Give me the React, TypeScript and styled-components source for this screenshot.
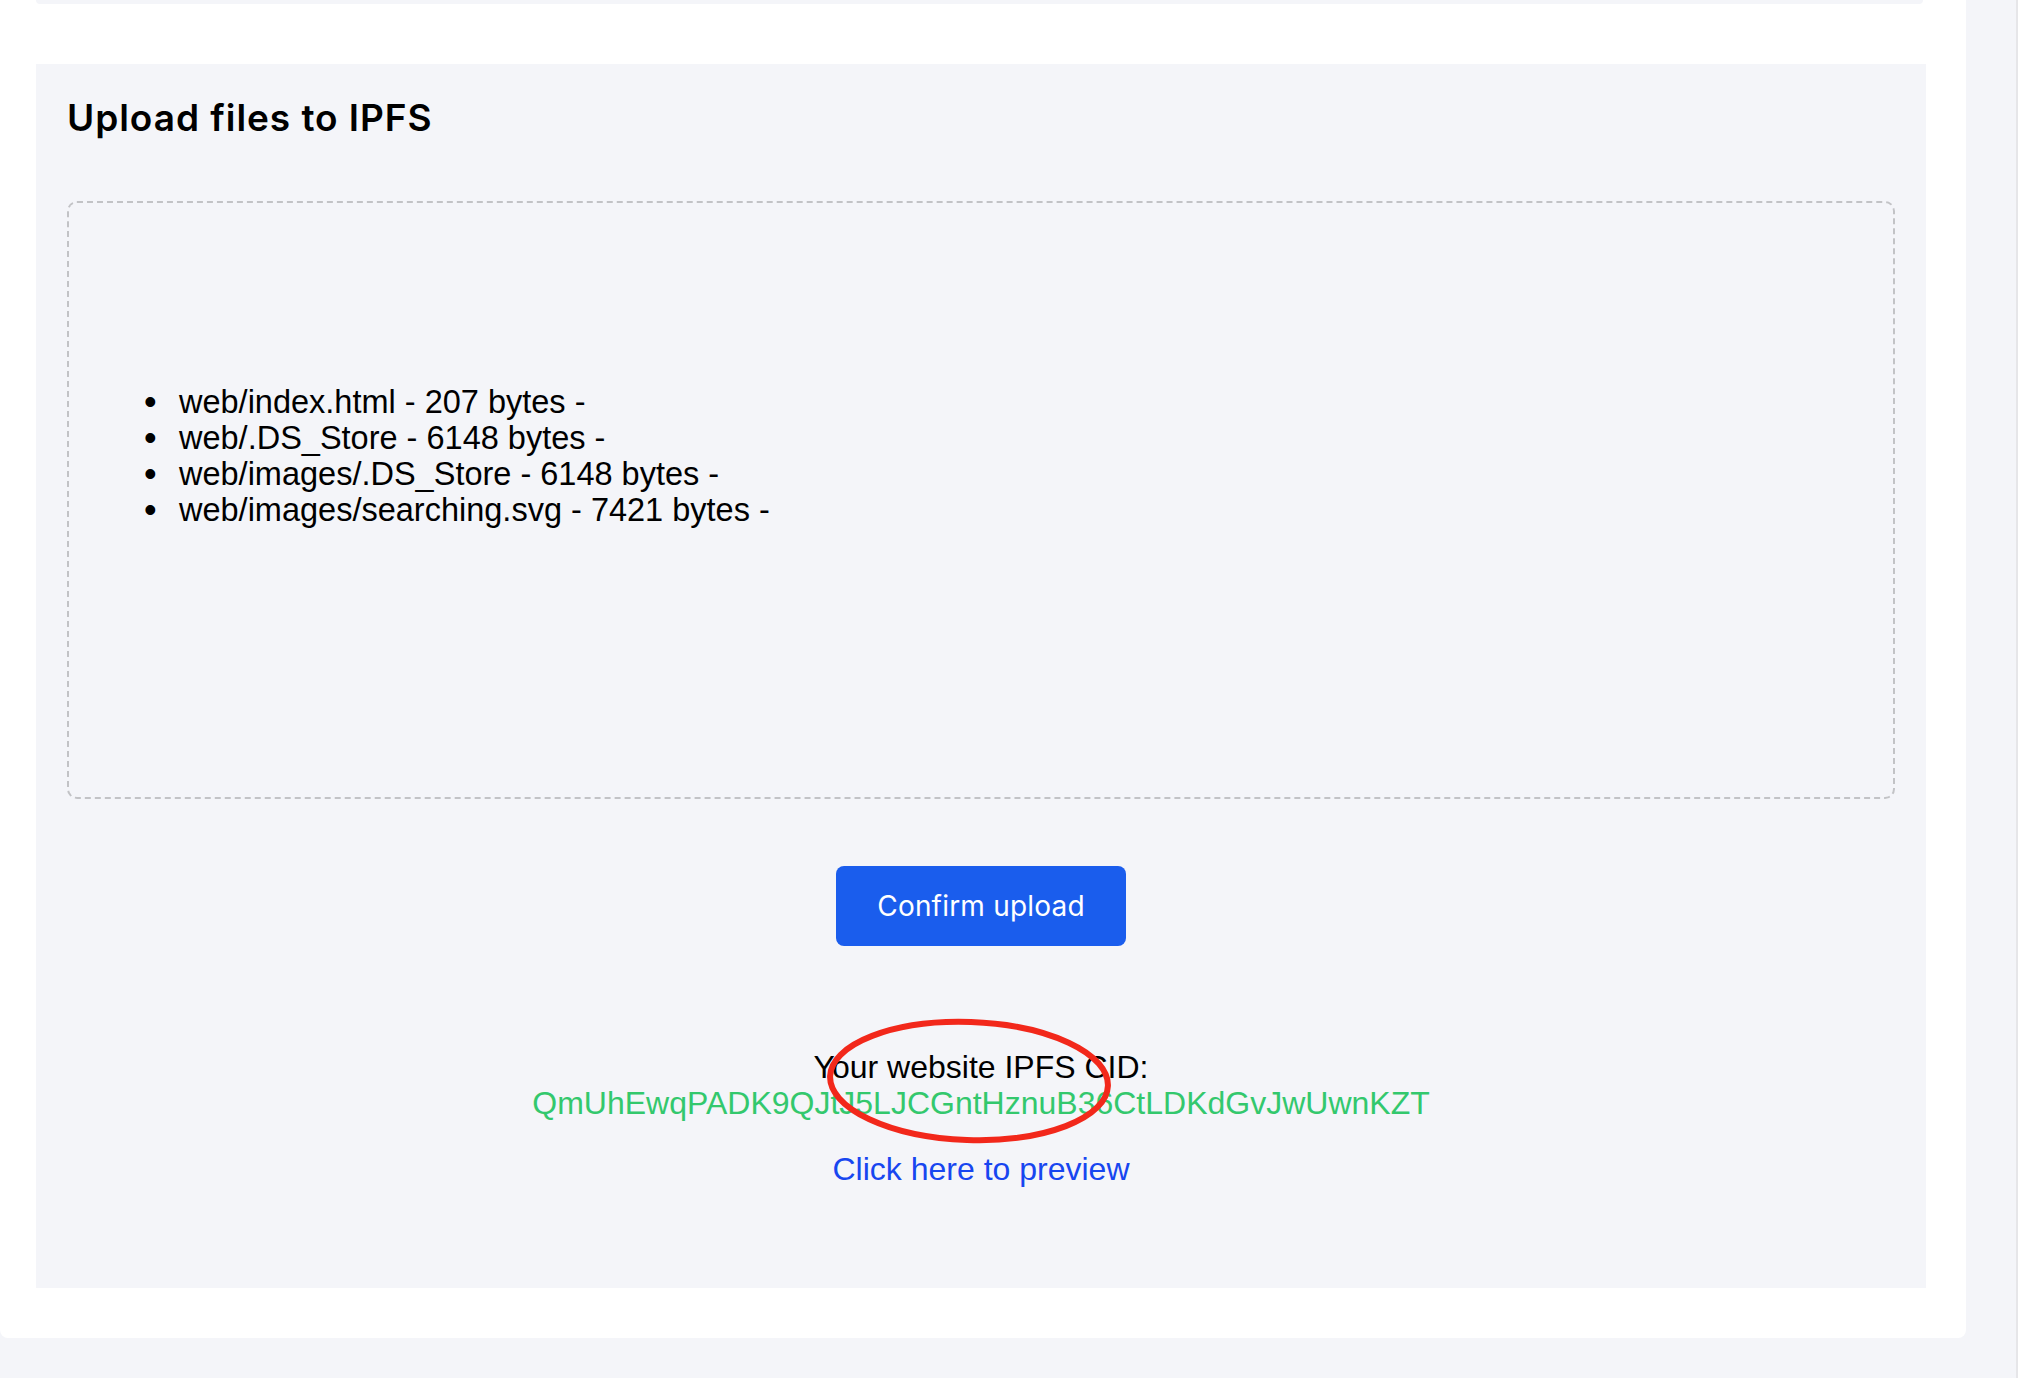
import React from 'react'
import styled, { createGlobalStyle } from 'styled-components'

interface UploadedFile {
  path: string
  size: number
}

const files: UploadedFile[] = [
  { path: 'web/index.html', size: 207 },
  { path: 'web/.DS_Store', size: 6148 },
  { path: 'web/images/.DS_Store', size: 6148 },
  { path: 'web/images/searching.svg', size: 7421 },
]

const cid = 'QmUhEwqPADK9QJtJ5LJCGntHznuB36CtLDKdGvJwUwnKZT'

export default function App() {
  return (
    <>
      <GlobalStyle />
      <Page>
        <Panel>
          <TopCard />
          <UploadSection>
            <Title>Upload files to IPFS</Title>

            <DropZone>
              <FileList>
                {files.map((file) => (
                  <FileItem key={file.path}>
                    {file.path} - {file.size} bytes -
                  </FileItem>
                ))}
              </FileList>
            </DropZone>

            <Actions>
              <ConfirmButton type="button">Confirm upload</ConfirmButton>
            </Actions>

            <Result>
              <CidLabel>Your website IPFS CID:</CidLabel>
              <CidValue>{cid}</CidValue>
              <PreviewLink href="#">Click here to preview</PreviewLink>
              {/* hand-drawn highlight over the CID */}
              <Mark viewBox="0 0 290 130" aria-hidden="true">
                <ellipse
                  cx="145"
                  cy="65"
                  rx="139"
                  ry="59"
                  fill="none"
                  stroke="#f2281b"
                  strokeWidth="6"
                  transform="rotate(2 145 65)"
                />
              </Mark>
            </Result>
          </UploadSection>
        </Panel>
        <Gutter />
      </Page>
    </>
  )
}

const GlobalStyle = createGlobalStyle`
  * {
    box-sizing: border-box;
  }

  body {
    margin: 0;
    background: #f4f5f9;
    font-family: 'Liberation Sans', Arial, Helvetica, sans-serif;
    color: #000;
  }
`

const Page = styled.div`
  display: flex;
  align-items: flex-start;
  min-height: 100vh;
`

const Panel = styled.main`
  width: 1966px;
  flex-shrink: 0;
  display: flex;
  flex-direction: column;
  background: #fff;
  border-radius: 0 0 8px 8px;
  padding: 0 40px 50px 36px;
`

const TopCard = styled.div`
  height: 4px;
  margin: 0 3px 60px 0;
  background: #f4f5f9;
  border-radius: 0 0 10px 10px;
`

const UploadSection = styled.section`
  display: flex;
  flex-direction: column;
  background: #f4f5f9;
  padding: 31px 31px 101px;
`

const Title = styled.h3`
  margin: 0;
  font-family: Inter, 'Liberation Sans', sans-serif;
  font-size: 37px;
  font-weight: 600;
  line-height: 46px;
  letter-spacing: 0.95px;
  color: #000;
`

const DropZone = styled.div`
  height: 598px;
  margin-top: 60px;
  padding: 181px 30px 0;
  border: 2px dashed #c2c3c6;
  border-radius: 10px;
`

const FileList = styled.ul`
  margin: 0;
  padding-left: 80px;
  list-style: none;
`

const FileItem = styled.li`
  height: 36px;
  font-size: 32.5px;
  line-height: 36px;
  color: #000;

  &::before {
    content: '•';
    display: inline-block;
    vertical-align: top;
    width: 35px;
    margin-left: -35px;
    font-size: 36px;
    line-height: 36px;
  }
`

const Actions = styled.div`
  display: flex;
  justify-content: center;
  margin-top: 67px;
`

const ConfirmButton = styled.button`
  width: 290px;
  height: 80px;
  border: none;
  border-radius: 8px;
  background: #1a5ded;
  color: #fff;
  font-family: Inter, 'Liberation Sans', sans-serif;
  font-size: 28px;
  font-weight: 400;
  letter-spacing: 0.2px;
  cursor: pointer;
`

const Result = styled.div`
  position: relative;
  display: flex;
  flex-direction: column;
  align-items: center;
  margin-top: 103px;
  font-size: 32px;
  line-height: 36px;
`

const CidLabel = styled.span`
  color: #000;
`

const CidValue = styled.span`
  color: #33c86d;
`

const PreviewLink = styled.a`
  margin-top: 30px;
  color: #1746f0;
  text-decoration: none;
`

const Mark = styled.svg`
  position: absolute;
  left: calc(50% - 157px);
  top: -33px;
  width: 290px;
  height: 130px;
  pointer-events: none;
`

const Gutter = styled.div`
  flex: 1;
  align-self: stretch;
  min-height: 100vh;
  border-right: 2px solid #e6e6e9;
`
